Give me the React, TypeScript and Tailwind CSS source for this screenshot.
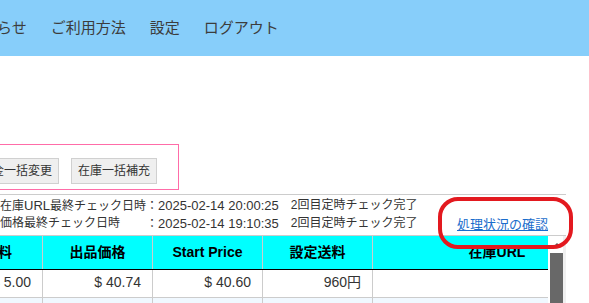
import React from 'react';

const navItems = ['お知らせ', 'ご利用方法', '設定', 'ログアウト'];

type Col = { head: string; width: string; value: string };

const cols: Col[] = [
  { head: '手数料', width: 'w-[103px]', value: '$ 5.00' },
  { head: '出品価格', width: 'w-[110px]', value: '$ 40.74' },
  { head: 'Start Price', width: 'w-[110px]', value: '$ 40.60' },
  { head: '設定送料', width: 'w-[110px]', value: '960円' },
  { head: '在庫URL', width: 'w-[248px]', value: '' },
];

export default function App() {
  return (
    <div className="relative h-[303px] w-[589px] overflow-hidden bg-white font-['Liberation_Sans','Noto_Sans_CJK_JP',sans-serif] text-[#333]">
      <header className="flex h-[56px] items-center gap-[24px] bg-[#87cefa] text-[15px] text-[#3c3c3c]">
        {navItems.map((item, i) => (
          <span key={item} className={i === 0 ? '-ml-[33px] whitespace-nowrap' : 'whitespace-nowrap'}>
            {item}
          </span>
        ))}
      </header>

      {/* bulk action box */}
      <div className="mt-[88px] -ml-[41px] flex w-[220px] gap-[12px] border border-[#ff6ca8] pt-[13px] pb-[5px] pl-[13px]">
        <button className="h-[26px] whitespace-nowrap border border-[#d0d0d0] bg-[#efefef] px-[6px] text-[12px] text-[#333]">
          料金一括変更
        </button>
        <button className="h-[26px] whitespace-nowrap border border-[#d0d0d0] bg-[#efefef] px-[6px] text-[12px] text-[#333]">
          在庫一括補充
        </button>
      </div>

      <div className="mt-[4px] h-px w-[566px] bg-[#cccccc]" />

      {/* last check info */}
      <div className="flex w-[566px] items-end justify-between pt-[2px] pb-[2px] pr-[18px]">
        <div className="grid grid-cols-[auto_auto_auto] whitespace-nowrap leading-[17px]">
          <span className="text-[12px]">
            在庫<span className="text-[13px]">URL</span>最終チェック日時
          </span>
          <span className="text-[12px]">
            ：<span className="text-[13px]">2025-02-14 20:00:25</span>
          </span>
          <span className="pl-[12px] text-[12px]">2回目定時チェック完了</span>
          <span className="text-[12px]">価格最終チェック日時</span>
          <span className="text-[12px]">
            ：<span className="text-[13px]">2025-02-14 19:10:35</span>
          </span>
          <span className="pl-[12px] text-[12px]">2回目定時チェック完了</span>
        </div>
        <a href="#" className="text-[13px] leading-[17px] text-[#1a6dcc] underline">
          処理状況の確認
        </a>
      </div>

      {/* table */}
      <div className="flex w-[566px] border-t border-[#cccccc]">
        <div className="w-[551px] overflow-hidden">
          <div className="-ml-[60px] flex w-[681px] flex-col">
            <div className="flex h-[34px] border-b border-black bg-[#00ffff] text-[14px] font-bold text-black">
              {cols.map((c, i) => (
                <div
                  key={c.head}
                  className={`${c.width} flex shrink-0 items-center justify-center whitespace-nowrap ${i < cols.length - 1 ? 'border-r border-[#cccccc]' : ''}`}
                >
                  {c.head}
                </div>
              ))}
            </div>
            <div className="flex h-[28px] border-b border-[#cccccc] text-[14px] text-[#333]">
              {cols.map((c, i) => (
                <div
                  key={c.head}
                  className={`${c.width} flex shrink-0 items-center justify-end pr-[11px] pb-[2px] whitespace-nowrap ${i < cols.length - 1 ? 'border-r border-[#cccccc]' : ''}`}
                >
                  {c.value}
                </div>
              ))}
            </div>
            <div className="flex h-[28px] bg-[#f0f8ff]">
              {cols.map((c, i) => (
                <div
                  key={c.head}
                  className={`${c.width} shrink-0 ${i < cols.length - 1 ? 'border-r border-[#cccccc]' : ''}`}
                />
              ))}
            </div>
          </div>
        </div>
        {/* scrollbar */}
        <div className="ml-[2px] flex w-[13px] flex-col">
          <div className="flex h-[17px] items-start justify-center pt-[7px]">
            <span className="h-0 w-0 border-x-[4px] border-b-[4px] border-x-transparent border-b-[#555]" />
          </div>
          <div className="flex-1 bg-[#686868]" />
        </div>
        <div className="w-[3px] bg-[#f0f0f0]" />
      </div>

      {/* red marker */}
      <div className="absolute left-[438px] top-[197px] h-[52px] w-[135px] rounded-[20px] border-[4px] border-[#e3191f]" />
    </div>
  );
}
